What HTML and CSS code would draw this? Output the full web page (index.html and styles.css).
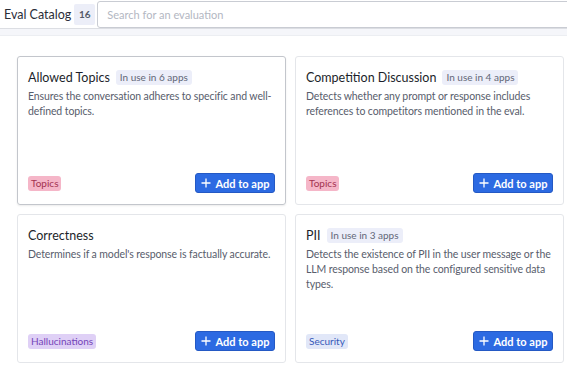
FILE: index.html
```html
<!DOCTYPE html>
<html lang="en">
<head>
  <meta charset="UTF-8">
  <meta name="viewport" content="width=device-width, initial-scale=1">
  <title>Eval Catalog</title>
  <link rel="stylesheet" href="styles.css">
</head>
<body>

  <!-- Header -->
  <div class="header">
    <h1 class="page-title">Eval Catalog</h1>
    <span class="count">16</span>
    <input class="search" type="text" placeholder="Search for an evaluation">
  </div>
  <div class="header-band"></div>

  <!-- Catalogo -->
  <div class="catalog">
    <div class="card card-active">
      <div class="card-head">
        <h2>Allowed Topics</h2>
        <span class="usage">In use in 6 apps</span>
      </div>
      <p class="desc">Ensures the conversation adheres to specific and well-defined topics.</p>
      <div class="card-foot">
        <span class="tag tag-topics">Topics</span>
        <button class="add-btn"><svg width="10" height="10" viewBox="0 0 10 10"><path d="M5 0.5v9M0.5 5h9" stroke="#fff" stroke-width="1.3"/></svg>Add to app</button>
      </div>
    </div>

    <div class="card">
      <div class="card-head">
        <h2>Competition Discussion</h2>
        <span class="usage">In use in 4 apps</span>
      </div>
      <p class="desc">Detects whether any prompt or response includes references to competitors mentioned in the eval.</p>
      <div class="card-foot">
        <span class="tag tag-topics">Topics</span>
        <button class="add-btn"><svg width="10" height="10" viewBox="0 0 10 10"><path d="M5 0.5v9M0.5 5h9" stroke="#fff" stroke-width="1.3"/></svg>Add to app</button>
      </div>
    </div>

    <div class="card">
      <div class="card-head">
        <h2>Correctness</h2>
      </div>
      <p class="desc">Determines if a model's response is factually accurate.</p>
      <div class="card-foot">
        <span class="tag tag-halluc">Hallucinations</span>
        <button class="add-btn"><svg width="10" height="10" viewBox="0 0 10 10"><path d="M5 0.5v9M0.5 5h9" stroke="#fff" stroke-width="1.3"/></svg>Add to app</button>
      </div>
    </div>

    <div class="card">
      <div class="card-head">
        <h2>PII</h2>
        <span class="usage">In use in 3 apps</span>
      </div>
      <p class="desc">Detects the existence of PII in the user message or the LLM response based on the configured sensitive data types.</p>
      <div class="card-foot">
        <span class="tag tag-security">Security</span>
        <button class="add-btn"><svg width="10" height="10" viewBox="0 0 10 10"><path d="M5 0.5v9M0.5 5h9" stroke="#fff" stroke-width="1.3"/></svg>Add to app</button>
      </div>
    </div>
  </div>

</body>
</html>
```

FILE: styles.css
```css
* {
  margin: 0;
  padding: 0;
  box-sizing: border-box;
}
body {
  font-family: 'Lato', 'Noto Sans', sans-serif;
  background: #fff;
  color: #1f2230;
  width: 567px;
  overflow: hidden;
}
.header {
  height: 29px;
  display: flex;
  align-items: center;
  padding-left: 4px;
  border-bottom: 1px solid #dcdee3;
}
.page-title {
  font-size: 12.5px;
  font-weight: 400;
  color: #2a2d38;
}
.count {
  margin-left: 3px;
  width: 21px;
  height: 21px;
  display: flex;
  align-items: center;
  justify-content: center;
  background: #eceef8;
  border-radius: 2px;
  font-size: 10px;
  font-weight: 700;
  color: #555a68;
}
.search {
  margin-left: 2px;
  flex: 1;
  height: 27px;
  margin-right: -4px;
  border: 1px solid #c9ccd3;
  border-radius: 3px;
  padding-left: 9px;
  font-family: inherit;
  font-size: 11px;
  color: #333;
  outline: none;
}
.search::placeholder {
  color: #b3b7c2;
}
.header-band {
  height: 7px;
  background: #f5f6fa;
  border-bottom: 1px solid #eceef2;
}
.catalog {
  display: grid;
  grid-template-columns: 269px 269px;
  grid-auto-rows: 149px;
  gap: 9px;
  padding: 20px 0 0 17px;
}
.card {
  border: 1px solid #e4e6ea;
  border-radius: 3px;
  padding: 12px 10px 11px 10px;
  display: flex;
  flex-direction: column;
}
.card-active {
  border-color: #c3c6cc;
  box-shadow: 0 1px 2px rgba(0, 0, 0, 0.08);
}
.card-head {
  display: flex;
  align-items: center;
  gap: 6px;
  height: 16px;
}
.card-head h2 {
  font-size: 12.5px;
  font-weight: 400;
  color: #1c1f2b;
}
.usage {
  background: #eceef9;
  color: #626777;
  font-size: 10px;
  padding: 1px 4px;
  border-radius: 3px;
  line-height: 13px;
}
.desc {
  margin-top: 4px;
  font-size: 10.5px;
  letter-spacing: -0.1px;
  line-height: 15px;
  color: #585d6c;
}
.card-foot {
  margin-top: auto;
  display: flex;
  justify-content: space-between;
  align-items: center;
}
.tag {
  font-size: 10px;
  line-height: 15px;
  padding: 0 3px;
  border-radius: 3px;
}
.tag-topics {
  background: #f5b6c8;
  color: #a3324f;
}
.tag-halluc {
  background: #dfd0f6;
  color: #7444b8;
}
.tag-security {
  background: #e1e7f8;
  color: #3759b8;
}
.add-btn {
  width: 80px;
  height: 20px;
  background: #2c6ae2;
  border: 1px solid #2459c4;
  border-radius: 3px;
  color: #fff;
  font-family: inherit;
  font-size: 11px;
  font-weight: 700;
  display: flex;
  align-items: center;
  justify-content: center;
  gap: 5px;
  cursor: pointer;
}
```
